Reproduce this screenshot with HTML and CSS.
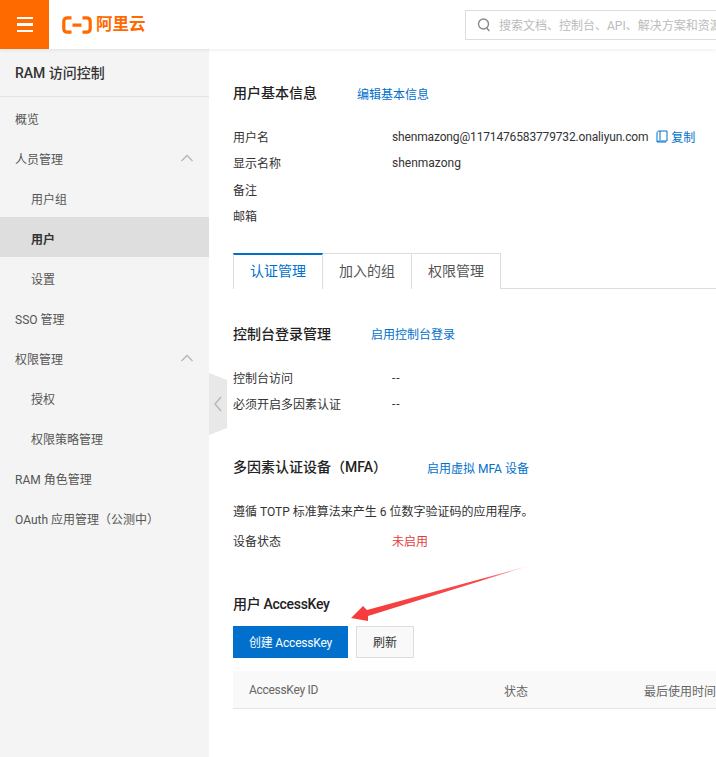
FILE: index.html
```html
<!DOCTYPE html>
<html lang="zh">
<head>
<meta charset="utf-8">
<title>RAM 访问控制</title>
<link rel="stylesheet" href="styles.css">
</head>
<body>
<header class="topbar">
  <div class="menu-btn"><span></span><span></span><span></span></div>
  <div class="logo">
    <svg class="logo-mark" width="30" height="18" viewBox="0 0 30 18"><path d="M9.500 1.800H5.500C3 1.800 1.800 3.300 1.800 5.300v7.400c0 2 1.200 3.500 3.700 3.500h4M20.500 1.800h4c2.500 0 3.700 1.500 3.700 3.500v7.400c0 2-1.200 3.500-3.700 3.500h-4M10.500 9.200h9" fill="none" stroke="#ff6a00" stroke-width="3.200"/></svg>
    <span class="logo-text">阿里云</span>
  </div>
  <div class="search">
    <svg width="14" height="14" viewBox="0 0 14 14"><circle cx="6.500" cy="6" r="5" fill="none" stroke="#888" stroke-width="1.400"/><path d="M9.800 10l2.500 3" stroke="#888" stroke-width="1.400"/></svg>
    <span>搜索文档、控制台、API、解决方案和资源</span>
  </div>
</header>
<div class="layout">
  <aside class="sidebar">
    <div class="side-title">RAM 访问控制</div>
    <nav class="side-nav">
      <div class="nav-item">概览</div>
      <div class="nav-item">人员管理<svg class="chev" width="14" height="8" viewBox="0 0 14 8"><path d="M1.500 7L7 1.500 12.500 7" fill="none" stroke="#b5b5b5" stroke-width="1.300"/></svg></div>
      <div class="nav-item sub">用户组</div>
      <div class="nav-item sub active">用户</div>
      <div class="nav-item sub">设置</div>
      <div class="nav-item">SSO 管理</div>
      <div class="nav-item">权限管理<svg class="chev" width="14" height="8" viewBox="0 0 14 8"><path d="M1.500 7L7 1.500 12.500 7" fill="none" stroke="#b5b5b5" stroke-width="1.300"/></svg></div>
      <div class="nav-item sub">授权</div>
      <div class="nav-item sub">权限策略管理</div>
      <div class="nav-item">RAM 角色管理</div>
      <div class="nav-item">OAuth 应用管理（公测中）</div>
    </nav>
    <div class="collapse">
      <svg width="18" height="62" viewBox="0 0 18 62"><path d="M0 0l18 7v48L0 62z" fill="#e8e8e8"/><path d="M12 24l-6 7 6 7" fill="none" stroke="#b8b8b8" stroke-width="1.500"/></svg>
    </div>
  </aside>
  <main class="content">
    <div class="sec-head first"><h2>用户基本信息</h2><a class="link">编辑基本信息</a></div>
    <dl class="info">
      <div class="row"><dt>用户名</dt><dd><span class="latin">shenmazong@1171476583779732.onaliyun.com</span><svg class="copy" width="12" height="13" viewBox="0 0 12 13"><path d="M3 1h8v10H3C1.800 11 1 11.600 1 12V3c0-1 .8-2 2-2z" fill="none" stroke="#0070cc" stroke-width="1"/><path d="M1 12h9M4 1v9" stroke="#0070cc" stroke-width="1"/></svg><a class="link">复制</a></dd></div>
      <div class="row"><dt>显示名称</dt><dd>shenmazong</dd></div>
      <div class="row"><dt>备注</dt><dd></dd></div>
      <div class="row"><dt>邮箱</dt><dd></dd></div>
    </dl>
    <div class="tabs">
      <div class="tab active">认证管理</div>
      <div class="tab">加入的组</div>
      <div class="tab">权限管理</div>
    </div>
    <div class="sec-head s2"><h2>控制台登录管理</h2><a class="link">启用控制台登录</a></div>
    <dl class="info tight">
      <div class="row"><dt>控制台访问</dt><dd class="dash">--</dd></div>
      <div class="row"><dt>必须开启多因素认证</dt><dd class="dash">--</dd></div>
    </dl>
    <div class="sec-head s3"><h2>多因素认证设备（MFA）</h2><a class="link">启用虚拟 MFA 设备</a></div>
    <p class="desc">遵循 TOTP 标准算法来产生 6 位数字验证码的应用程序。</p>
    <div class="row status"><dt>设备状态</dt><dd class="off">未启用</dd></div>
    <h2 class="ak-title">用户 AccessKey</h2>
    <div class="btns"><button class="btn primary">创建 AccessKey</button><button class="btn plain">刷新</button></div>
    <div class="thead"><span class="c1">AccessKey ID</span><span class="c2">状态</span><span class="c3">最后使用时间</span></div>
  </main>
</div>
<svg class="arrow" width="182" height="60" viewBox="0 0 182 60"><defs><linearGradient id="g" x1="0" x2="1" y1="1" y2="0"><stop offset="0" stop-color="#f63a3a"/><stop offset=".75" stop-color="#f84a4a"/><stop offset="1" stop-color="#fbd0d0"/></linearGradient></defs><path d="M1 53L13 41 17 45 178 1 18 51 18 56z" fill="url(#g)"/></svg>
</body>
</html>
```
FILE: styles.css
```css
* { box-sizing: border-box; }
html, body { margin: 0; padding: 0; }
body {
  width: 716px; height: 757px; overflow: hidden; position: relative; background: #fff;
  font-family: Roboto, "Noto Sans CJK SC", sans-serif; font-size: 12px; color: #333;
}
.topbar { height: 49px; display: flex; align-items: center; background: #fff; box-shadow: 0 1px 4px rgba(0,0,0,.08); position: relative; z-index: 2; }
.menu-btn { width: 49px; height: 49px; background: #ff6a00; display: flex; flex-direction: column; justify-content: center; align-items: center; gap: 4px; }
.menu-btn span { width: 16px; height: 2.500px; background: #fff; }
.logo { display: flex; align-items: center; margin-left: 13px; gap: 4px; }
.logo-text { color: #ff6a00; font-size: 16.500px; font-weight: 700; line-height: 20px; }
.search { margin-left: auto; width: 260px; margin-right: -9px; height: 30px; border: 1px solid #ddd; border-right: 0; display: flex; align-items: center; gap: 8px; padding-left: 11px; color: #bbb; white-space: nowrap; overflow: hidden; flex: none; }
.search svg { flex: none; }
.layout { display: flex; height: 708px; }
.sidebar { width: 209px; flex: none; background: #f4f4f4; position: relative; }
.side-title { height: 48px; padding-left: 15px; border-bottom: 1px solid #e3e3e3; line-height: 49px; font-size: 14px; font-weight: 500; color: #333; }
.nav-item { height: 40px; padding: 2px 15px 0; color: #555; display: flex; align-items: center; justify-content: space-between; }
.nav-item.sub { padding-left: 31px; }
.nav-item.active { background: #dedede; color: #333; font-weight: 700; }
.collapse { position: absolute; left: 209px; top: 324px; width: 18px; height: 62px; }
.collapse svg { display: block; }
.content { flex: 1; min-width: 0; padding-left: 24px; overflow: hidden; white-space: nowrap; }
h2 { margin: 0; font-size: 14px; font-weight: 500; color: #222; line-height: 20px; }
.link { color: #0070cc; }
.sec-head { display: flex; align-items: center; height: 20px; gap: 40px; }
.sec-head.first { margin-top: 34px; }
.sec-head.s2 { margin-top: 35px; }
.sec-head.s3 { margin-top: 40px; }
dl { margin: 0; }
dd { margin: 0; }
.info { margin-top: 20.500px; }
.row { display: flex; height: 26.300px; align-items: center; }
.row dt { width: 159px; flex: none; color: #333; }
.row dd { color: #333; display: flex; align-items: center; }
.latin { letter-spacing: -.15px; }
.dash { letter-spacing: 1px; }
.copy { margin: 0 3px 0 8px; }
.tabs { margin-top: 24.300px; height: 36px; display: flex; border-bottom: 1px solid #ddd; }
.tab { width: 89px; height: 36px; border: 1px solid #ddd; border-left: 0; border-bottom: 0; line-height: 35px; text-align: center; font-size: 14px; color: #555; background: #fff; }
.tab.active { width: 90px; border-left: 1px solid #ddd; border-top: 2px solid #0070cc; color: #0070cc; margin-bottom: -1px; line-height: 33px; }
.desc { margin: 25px 0 0; line-height: 20px; color: #333; }
.status { margin-top: 5.500px; }
.off { color: #e0403c !important; }
.ak-title { margin-top: 40px; letter-spacing: -.3px; }
.btns { display: flex; gap: 8px; margin-top: 12px; }
.btn { height: 32px; padding: 0; border: 1px solid #ddd; font: inherit; }
.btn.primary { width: 115px; background: #0070cc; border: 0; color: #fff; letter-spacing: -.2px; }
.btn.plain { width: 58px; background: #f9f9f9; color: #333; }
.thead { margin-top: 13px; height: 38px; background: #f9f9f9; border-bottom: 1px solid #e5e5e5; display: flex; align-items: center; color: #666; padding: 2px 0 0 16px; }
.c1 { width: 255px; flex: none; letter-spacing: -.3px; }
.c2 { width: 140px; flex: none; }
.c3 { flex: none; }
.arrow { position: absolute; left: 350px; top: 565px; pointer-events: none; }
```
